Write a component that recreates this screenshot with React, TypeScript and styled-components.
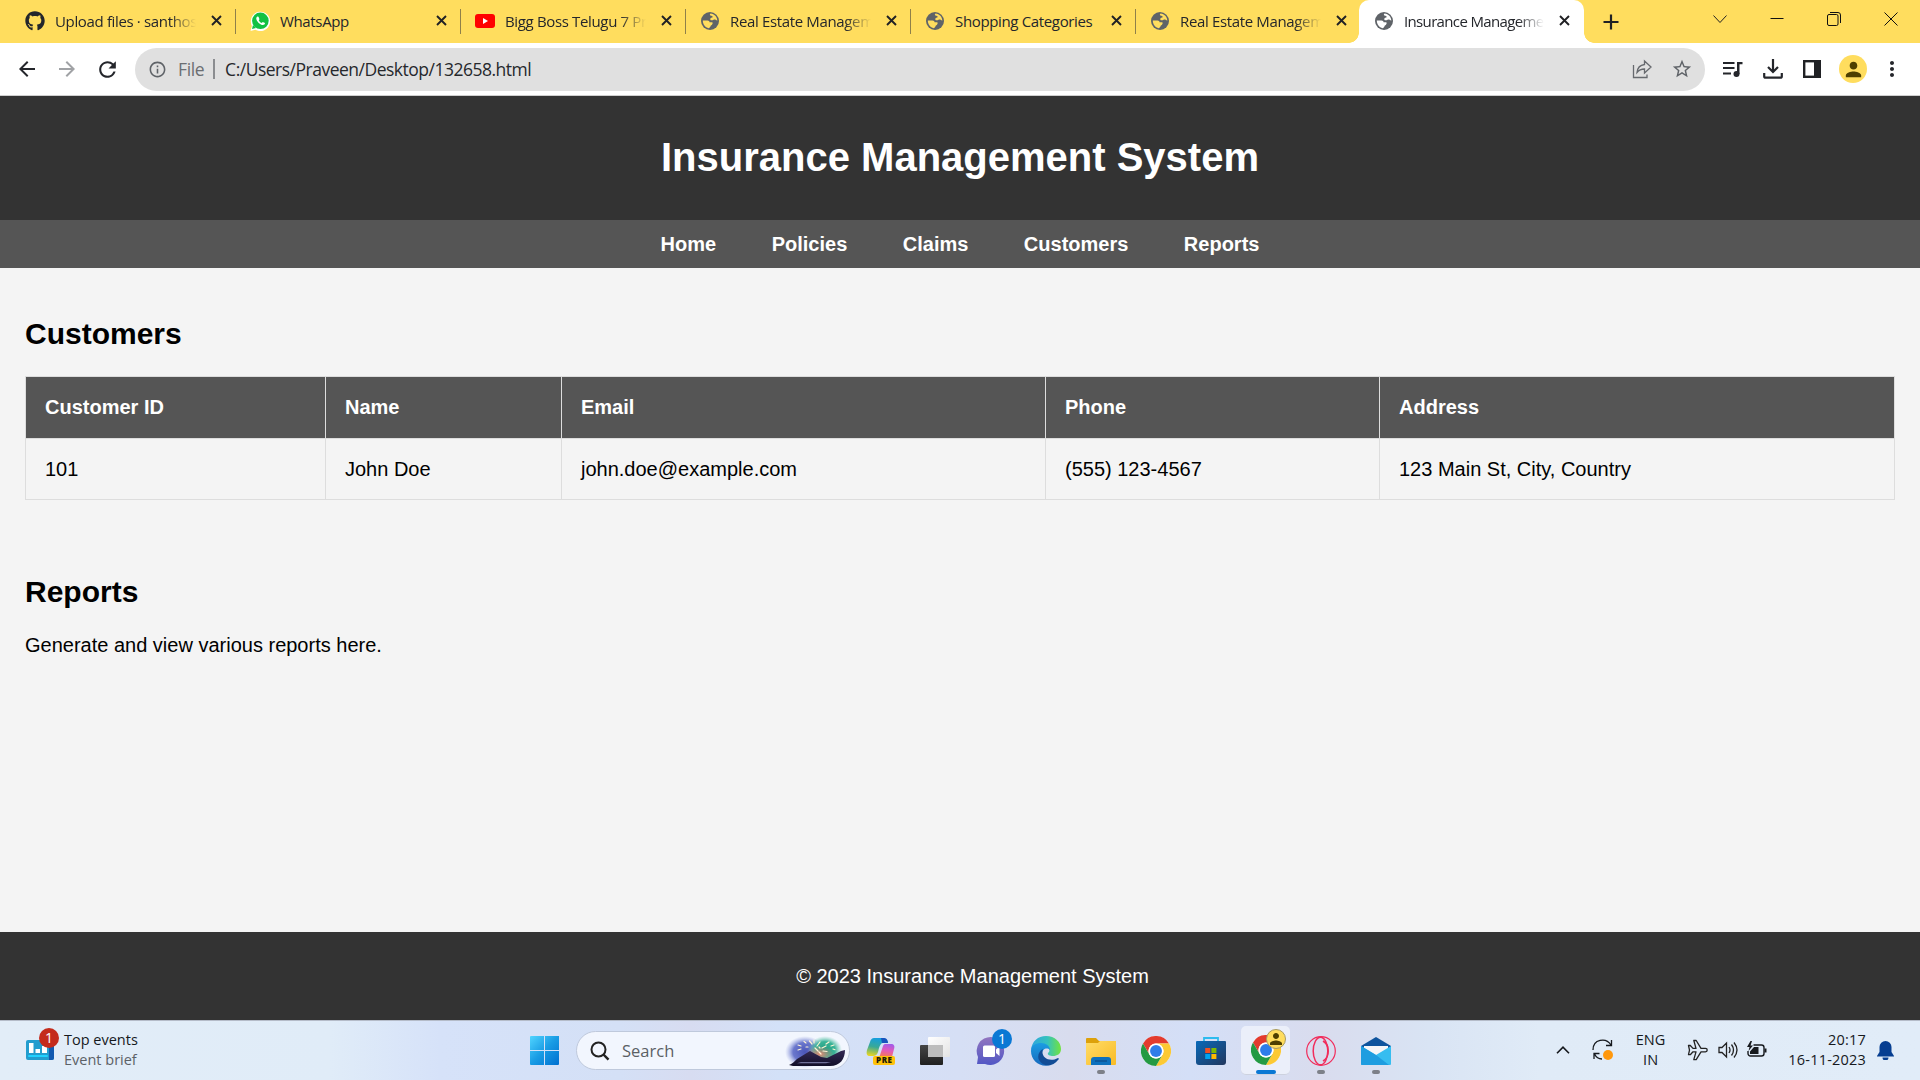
import React from "react";
import styled, { createGlobalStyle, css } from "styled-components";
import {
  MdArrowBack, MdArrowForward, MdRefresh, MdInfoOutline, MdStarBorder, MdMoreVert, MdPerson,
} from "react-icons/md";
import { FaGithub } from "react-icons/fa";

const Global = createGlobalStyle`
  html, body { margin: 0; padding: 0; }
  body { overflow: hidden; }
  *, *::before, *::after { box-sizing: border-box; }
  svg { display: block; flex: none; }
`;

const ui = css`font-family: "Open Sans", "Noto Sans", sans-serif;`;

const Screen = styled.div`
  width: 1920px;
  height: 1080px;
  display: flex;
  flex-direction: column;
  overflow: hidden;
  ${ui}
`;

/* Browser window */
const TabStrip = styled.div`
  height: 43px;
  flex: none;
  display: flex;
  background: #ffdd5e;
  padding-left: 11px;
  color: #24262b;
`;
const Tab = styled.div<{ $active?: boolean; $line?: boolean }>`
  position: relative;
  width: 225px;
  height: 43px;
  flex: none;
  display: flex;
  align-items: center;
  padding: 0 14px 2px 14px;
  gap: 10px;
  ${(p) => p.$line && css`
    &::after {
      content: "";
      position: absolute;
      right: 0;
      top: 9px;
      width: 1px;
      height: 25px;
      background: #8f8049;
    }
  `}
  ${(p) => p.$active && css`
    background: #fff;
    border-radius: 10px 10px 0 0;
    margin-left: -2px;
    padding-left: 15px;
    &::before, &::after {
      content: "";
      position: absolute;
      bottom: 0;
      width: 10px;
      height: 10px;
    }
    &::before { left: -10px; background: radial-gradient(circle at 0 0, #ffdd5e 9.5px, #fff 10px); }
    &::after { right: -10px; background: radial-gradient(circle at 100% 0, #ffdd5e 9.5px, #fff 10px); }
  `}
`;
const TabTitle = styled.span<{ $fade?: boolean; $tight?: boolean }>`
  flex: 1;
  min-width: 0;
  overflow: hidden;
  white-space: nowrap;
  font-size: 15px;
  line-height: 22px;
  letter-spacing: ${(p) => (p.$tight ? -0.65 : -0.35)}px;
  ${(p) => p.$fade && css`
    -webkit-mask-image: linear-gradient(to right, #000 calc(100% - 26px), transparent);
    mask-image: linear-gradient(to right, #000 calc(100% - 26px), transparent);
  `}
`;
const TabClose = styled.span`
  width: 11px;
  margin-left: 5px;
`;
const NewTab = styled.div`
  width: 54px;
  height: 43px;
  display: flex;
  align-items: center;
  justify-content: center;
`;
const WindowButtons = styled.div`
  margin: 0 1px 0 auto;
  height: 38px;
  width: 228px;
  display: flex;
  align-items: center;
`;
const WindowButton = styled.div`
  width: 57px;
  display: flex;
  justify-content: center;
`;
const Toolbar = styled.div`
  height: 53px;
  flex: none;
  display: flex;
  align-items: center;
  background: #fff;
  border-bottom: 1px solid #cfcfcf;
  color: #24262b;
  padding-left: 15px;
`;
const NavButtons = styled.div`
  display: flex;
  flex: none;
  gap: 16px;
  width: 120px;
`;
const Omnibox = styled.div`
  height: 43px;
  width: 1570px;
  flex: none;
  border-radius: 22px;
  background: #e0e0e0;
  display: flex;
  align-items: center;
  padding: 0 12px 0 13px;
  color: #5f6368;
  font-size: 17.5px;
`;
const Scheme = styled.span`
  margin-left: 11px;
  color: #6b6e72;
  letter-spacing: -.4px;
`;
const Bar = styled.span`
  width: 2px;
  height: 20px;
  margin: 0 10.5px 0 8.5px;
  background: #8b8d90;
`;
const Url = styled.span`
  color: #26282c;
  letter-spacing: -.5px;
  flex: 1;
`;
const PageActions = styled.div`
  display: flex;
  gap: 18px;
  align-items: center;
`;
const BrowserActions = styled.div`
  margin-left: 18px;
  flex: none;
  display: grid;
  grid-template-columns: 20px 20px 18px 28px 24px;
  column-gap: 20px;
  align-items: center;
`;
const Avatar = styled.div`
  width: 28px;
  height: 28px;
  border-radius: 50%;
  margin-left: -2px;
  display: flex;
  align-items: center;
  justify-content: center;
  background: #ffdd5e;
  color: #4d3f00;
`;
const More = styled.div`margin-left: -9px;`;

/* Web page */
const Page = styled.div`
  flex: 1;
  min-height: 0;
  display: flex;
  flex-direction: column;
  background: #f4f4f4;
  font-family: "Liberation Sans", Arial, sans-serif;
  font-size: 20px;
  line-height: 23px;
  color: #000;
`;
const Header = styled.header`
  height: 124px;
  padding-bottom: 2px;
  background: #333;
  color: #fff;
  display: flex;
  align-items: center;
  justify-content: center;
`;
const Title = styled.h1`
  margin: 0;
  font-size: 40px;
  line-height: 46px;
`;
const Nav = styled.nav`
  height: 48px;
  background: #555;
  color: #fff;
  display: flex;
  justify-content: center;
  align-items: center;
  gap: 55.5px;
  font-weight: bold;
`;
const Main = styled.main`
  flex: 1;
  padding: 49px 25px 0;
`;
const Heading = styled.h2`
  margin: 0;
  font-size: 30px;
  line-height: 34px;
`;
const Table = styled.table`
  width: 1869px;
  margin: 25px 0 75px;
  border-collapse: collapse;
  table-layout: fixed;
`;
const cell = css`
  height: 61.5px;
  padding: 0 19px;
  border: 1px solid #ddd;
  text-align: left;
`;
const Th = styled.th`${cell} background: #555; color: #fff;`;
const Td = styled.td`${cell} padding-top: 2px;`;
const Paragraph = styled.p`margin: 25px 0 0;`;
const Footer = styled.footer`
  height: 88px;
  padding-left: 25px;
  background: #333;
  color: #fff;
  display: flex;
  align-items: center;
  justify-content: center;
`;

/* Taskbar */
const Taskbar = styled.div`
  height: 60px;
  flex: none;
  display: flex;
  align-items: center;
  border-top: 1px solid #b5bcc9;
  background: linear-gradient(90deg, #e2edf8 0, #e0ecf8 330px, #d6e2f9 440px, #d4e0f6 620px, #d7dcf1 690px, #d3e1f8 780px, #d6dff5 960px, #d8dcee 1070px, #d4dff7 1190px, #d9dcee 1320px, #d9e4f4 1430px, #e0ebf7 1540px, #e1ecf8 1920px);
  color: #16191d;
`;
const Widgets = styled.div`
  width: 517px;
  padding: 0 0 2px 25px;
  display: flex;
  align-items: center;
  gap: 9px;
`;
const Lines = styled.div<{ $align?: string; $wide?: boolean }>`
  display: flex;
  flex-direction: column;
  text-align: ${(p) => p.$align || "left"};
  font-size: 14.5px;
  line-height: 20px;
  letter-spacing: ${(p) => (p.$wide ? ".2px" : "0")};
  white-space: nowrap;
`;
const Muted = styled.span`color: #5c6167;`;
const Apps = styled.div`
  display: flex;
  align-items: center;
`;
const Search = styled.div`
  width: 274px;
  height: 39px;
  margin: 0 3px 0 4px;
  border-radius: 20px;
  border: 1px solid #bfc9dc;
  background: #f2f6fe;
  display: flex;
  align-items: center;
  padding: 0 2px 0 13px;
  gap: 12px;
  font-size: 16.5px;
  color: #5b5f65;
  span { flex: 1; }
`;
const TaskButton = styled.div<{ $active?: boolean; $mark?: "open" | "focus" }>`
  position: relative;
  width: 49px;
  height: 49px;
  margin: 0 3px;
  display: flex;
  align-items: center;
  justify-content: center;
  ${(p) => p.$active && css`
    background: #ebeffa;
    border-radius: 5px;
    border-bottom: 1px solid #cdd2df;
  `}
  ${(p) => p.$mark && css`
    &::after {
      content: "";
      position: absolute;
      bottom: ${p.$active ? 0 : 1}px;
      width: ${p.$mark === "focus" ? 20 : 8}px;
      height: 4px;
      border-radius: 2px;
      background: ${p.$mark === "focus" ? "#0a78d4" : "#7d8088"};
    }
  `}
`;
const Badge = styled.span<{ $x: number; $y: number; $bg: string; $avatar?: boolean }>`
  position: absolute;
  left: ${(p) => p.$x}px;
  top: ${(p) => p.$y}px;
  width: 20px;
  height: 20px;
  border-radius: 50%;
  background: ${(p) => p.$bg};
  color: ${(p) => (p.$avatar ? "#4d3f00" : "#fff")};
  ${(p) => p.$avatar && "border: 1px solid #a99b61;"}
  display: flex;
  align-items: center;
  justify-content: center;
  font-size: 14px;
  line-height: 20px;
`;
const WidgetIcon = styled.div`position: relative;`;
const Tray = styled.div`
  margin-left: auto;
  padding: 0 26px 1px 0;
  display: flex;
  align-items: center;
`;
const TraySpace = styled.div`margin-left: 22px;`;
const Bell = styled.div`margin-left: 11px;`;
const TrayGroup = styled.div`
  display: flex;
  align-items: center;
  gap: 9px;
  width: 82px;
  margin: 0 19px 0 22px;
`;

const tabs = [
  { title: "Upload files · santhosh", icon: <FaGithub size={20} />, fade: true },
  { title: "WhatsApp", icon: <WhatsApp /> },
  { title: "Bigg Boss Telugu 7 Promo", icon: <YouTube />, fade: true },
  { title: "Real Estate Management", icon: <Globe />, fade: true },
  { title: "Shopping Categories", icon: <Globe /> },
  { title: "Real Estate Management", icon: <Globe />, fade: true },
  { title: "Insurance Management", icon: <Globe land="#fff" />, fade: true },
];

function Globe({ land = "#ffdd5e" }: { land?: string }) {
  return (
    <svg width="20" height="20" viewBox="0 0 20 20">
      <circle cx="10" cy="10" r="9" fill="#5f6368" />
      <path d="M10.600 2.600c3.800.3 6.600 3.400 6.700 7.200-1.200-.8-1.800-1.500-3.200-1.300-1 .1-1.100.9-2.400.8-1.300 0-1.700-.9-1.300-1.800.4-.8 1.500-.5 2.200-1.200.8-.9-.9-1.500-2.200-1.800-.8-.2-.7-1.200.2-1.900zM2.800 9.600h4.700c1.300 0 2 .8 2.100 1.700h2.300c.6 0 .9.6.7 1.200l-.5 1.100c-.3.7-1.200.6-1.500 1.300-.4.8-.7 1.800-1.900 2.300-3.500-.5-5.800-3.700-5.900-7.600z" fill={land} />
    </svg>
  );
}
function WhatsApp() {
  return (
    <svg width="20" height="20" viewBox="0 0 20 20">
      <path d="M.5 20l1.400-5A9.700 9.700 0 1 1 5.400 18.700z" fill="#fff" />
      <circle cx="10.400" cy="9.800" r="8.300" fill="#12c143" />
      <path d="M2 18l1-4 3 3z" fill="#12c143" />
      <path d="M7.200 5.500c-2.600 2.300.8 6.400 3.700 8 2.200 1.200 4.200.2 4.100-1.500l-2.200-1.100-1.100 1.200c-1.400-.6-2.400-1.600-3-2.800l.8-1.100-1-2.500z" fill="#fff" />
    </svg>
  );
}
function YouTube() {
  return (
    <svg width="20" height="20" viewBox="0 0 20 20">
      <rect x="0" y="3" width="20" height="14" rx="3" fill="#f00" />
      <path d="M8 7v6l5-3z" fill="#fff" />
    </svg>
  );
}
function Chrome() {
  return (
    <svg width="30" height="30" viewBox="0 0 48 48">
      <circle cx="24" cy="24" r="24" fill="#fff" />
      <path d="M3.200 12A24 24 0 0 1 44.800 12H24a12 12 0 0 0-10.400 18z" fill="#e33b2e" />
      <path d="M44.800 12A24 24 0 0 1 24 48l10.400-18A12 12 0 0 0 24 12z" fill="#fcc934" />
      <path d="M24 48A24 24 0 0 1 3.200 12l10.400 18A12 12 0 0 0 34.400 30z" fill="#249a43" />
      <circle cx="24" cy="24" r="12" fill="#fff" />
      <circle cx="24" cy="24" r="9.500" fill="#2f7de9" />
    </svg>
  );
}
function Start() {
  return (
    <svg width="29" height="29" viewBox="0 0 29 29">
      <defs><linearGradient id="st" x1="0" y1="0" x2="1" y2="1"><stop stopColor="#50d4ff" /><stop offset=".5" stopColor="#189be4" /><stop offset="1" stopColor="#0070d0" /></linearGradient></defs>
      <path d="M1 0h13v14H0V1a1 1 0 0 1 1-1zM15 0h14v14H15zM0 15h14v14H1a1 1 0 0 1-1-1zM15 15h14v13a1 1 0 0 1-1 1H15z" fill="url(#st)" />
    </svg>
  );
}
function Fireworks() {
  return (
    <svg width="62" height="34" viewBox="0 0 62 34">
      <defs>
        <radialGradient id="fb"><stop stopColor="#4a55b8" /><stop offset=".6" stopColor="#6b78cd" /><stop offset="1" stopColor="#a3aee4" stopOpacity="0" /></radialGradient>
        <radialGradient id="fg"><stop stopColor="#1e9d80" /><stop offset=".6" stopColor="#3ab397" /><stop offset="1" stopColor="#7fcfb9" stopOpacity="0" /></radialGradient>
        <linearGradient id="fm" x1="0" y1="0" x2="0" y2="1"><stop stopColor="#352a55" /><stop offset="1" stopColor="#110f28" /></linearGradient>
        <radialGradient id="fo"><stop stopColor="#e58a72" /><stop offset="1" stopColor="#d98276" stopOpacity="0" /></radialGradient>
      </defs>
      <ellipse cx="20" cy="18" rx="20" ry="16" fill="url(#fb)" />
      <ellipse cx="40" cy="16" rx="17" ry="14" fill="url(#fg)" />
      <ellipse cx="35" cy="20" rx="14" ry="8" fill="url(#fo)" />
      <path d="M4 31c3-1 5-3 8-6l13-8 11 6 6 1 14-7 4-1c0 9-5 16-15 16H8z" fill="url(#fm)" />
      <path d="M16 28h30l-5 1.200H12z" fill="#6f7099" />
      <path d="M27 10l-2.500-3M29 9V6M32 12l3-4M21 9l-2-1.500M16 12l-3-1M16 15l-3 1M37 14l4-2M38 17l4 .5M41 10l3-2M46 12l3-1M30 14l3 3M34 18l2 2M23 13h-2M48 15l2 .7M34 13l1 1" fill="none" stroke="#fff3d5" strokeWidth="1.200" strokeLinecap="round" />
    </svg>
  );
}
function Copilot() {
  return (
    <svg width="30" height="30" viewBox="0 0 30 30">
      <defs>
        <linearGradient id="ca" x1=".5" y1="0" x2=".3" y2="1"><stop stopColor="#159ee0" /><stop offset=".5" stopColor="#39a997" /><stop offset="1" stopColor="#e8d522" /></linearGradient>
        <linearGradient id="cb" x1=".6" y1="0" x2=".4" y2="1"><stop stopColor="#a45be8" /><stop offset=".5" stopColor="#e45ab9" /><stop offset="1" stopColor="#f47b4f" /></linearGradient>
      </defs>
      <path d="M8 2h9c3 0 4 2 5 5h-5c-2 0-3 2-4 5l-1 4c-1 3-3 4-5 4H4c-3 0-4-2-3-6L4 6c1-3 2-4 4-4z" fill="url(#ca)" />
      <path d="M15 2h3c3 0 4 3 4 5h-6z" fill="#1854bd" />
      <path d="M19 8h6c3 0 4 2 3 5l-2 8H11c3 0 3-2 4-5l2-6c.4-1 1-2 2-2z" fill="url(#cb)" />
      <rect x="7" y="20" width="22" height="9" rx="2" fill="#ffc20a" />
      <text x="18.300" y="27.400" textAnchor="middle" fontFamily="Open Sans" fontWeight="800" fontSize="8" letterSpacing=".5" fill="#221b05">PRE</text>
    </svg>
  );
}
function TaskView() {
  return (
    <svg width="32" height="30" viewBox="0 0 32 30">
      <defs>
        <linearGradient id="tv" x1="0" y1="0" x2="0" y2="1"><stop stopColor="#454545" /><stop offset="1" stopColor="#202020" /></linearGradient>
        <linearGradient id="tw" x1="0" y1="0" x2="1" y2="1"><stop stopColor="#fff" /><stop offset="1" stopColor="#e4e4e4" /></linearGradient>
      </defs>
      <rect x="0" y="9" width="23" height="20" rx="1" fill="url(#tv)" />
      <rect x="8" y="1" width="22" height="20" rx="1" fill="url(#tw)" />
      <path d="M8 9h15v12H8z" fill="#bdbdbd" />
    </svg>
  );
}
function Chat() {
  return (
    <svg width="30" height="30" viewBox="0 0 30 30">
      <defs><linearGradient id="ch" x1="0" y1="0" x2="0" y2="1"><stop stopColor="#9275bf" /><stop offset="1" stopColor="#5157c5" /></linearGradient></defs>
      <path d="M15 1a14 14 0 1 1-6 27H1l1-7A14 14 0 0 1 15 1z" fill="url(#ch)" />
      <rect x="7" y="9.500" width="12" height="11.500" rx="1.500" fill="#fff" />
      <path d="M20 13.500l3.500-3v9.500l-3.500-3z" fill="#fff" />
    </svg>
  );
}
function Edge() {
  return (
    <svg width="30" height="30" viewBox="0 0 30 30">
      <defs>
        <linearGradient id="e1"><stop stopColor="#2da5df" /><stop offset=".55" stopColor="#35c2bd" /><stop offset="1" stopColor="#72e33e" /></linearGradient>
        <linearGradient id="e2" x1="0" y1="0" x2="0" y2="1"><stop stopColor="#1b9de2" /><stop offset="1" stopColor="#1769bd" /></linearGradient>
      </defs>
      <path d="M0 14C1 5 7 0 15 0c9 0 15 6 15 13 0 5-4 7-8 7-3 0-6-1-5-3 1-1 2-2 1-4C16 7 5 6 0 14z" fill="url(#e1)" />
      <path d="M0 15C0 9 5 7 10 7c5 0 9 3 9 7-3-3-8-1-8 4 0 6 5 10 9 11C9 32 0 25 0 15z" fill="url(#e2)" />
      <path d="M12 13c-3 8 6 14 15 9 1 0 1 1 0 2-5 7-15 7-19 0-2-4 0-9 4-11z" fill="#124d96" />
    </svg>
  );
}
function Folder() {
  return (
    <svg width="30" height="30" viewBox="0 0 30 30">
      <defs><linearGradient id="fd" x1="0" y1="0" x2="1" y2="1"><stop stopColor="#ffdc68" /><stop offset="1" stopColor="#f9bb25" /></linearGradient></defs>
      <path d="M0 8V3a1 1 0 0 1 1-1h9l3 3h16a1 1 0 0 1 1 1v5H0z" fill="#dda10a" />
      <path d="M0 7h12l2-2h16v23a1 1 0 0 1-1 1H1a1 1 0 0 1-1-1z" fill="url(#fd)" />
      <path d="M5 29v-5a3 3 0 0 1 3-3h14a3 3 0 0 1 3 3v5z" fill="#0d70bd" />
      <path d="M9 25h12" stroke="#0b4e8c" strokeWidth="1.300" />
    </svg>
  );
}
function Store() {
  return (
    <svg width="30" height="30" viewBox="0 0 30 30">
      <defs><linearGradient id="ms" x1="0" y1="0" x2="1" y2="1"><stop stopColor="#0869b9" /><stop offset="1" stopColor="#22375e" /></linearGradient></defs>
      <path d="M8 7V2h14v5" fill="none" stroke="#2dbbee" strokeWidth="1.800" />
      <path d="M0 6a1 1 0 0 1 1-1h28a1 1 0 0 1 1 1v20a3 3 0 0 1-3 3H3a3 3 0 0 1-3-3z" fill="url(#ms)" />
      <path d="M9.200 12h5v5h-5z" fill="#f25022" /><path d="M15.400 12h5v5h-5z" fill="#7fba00" />
      <path d="M9.200 18h5v5h-5z" fill="#00a4ef" /><path d="M15.400 18h5v5h-5z" fill="#ffb900" />
    </svg>
  );
}
function OperaGx() {
  return (
    <svg width="30" height="30" viewBox="0 0 30 30" fill="none" stroke="#f12c5b">
      <circle cx="15" cy="15" r="14.300" strokeWidth="1.200" />
      <ellipse cx="14.500" cy="15" rx="7.300" ry="13.800" strokeWidth="1.500" />
      <path d="M17 5c7 4 7 16 0 20" strokeWidth="1.500" />
    </svg>
  );
}
function Mail() {
  return (
    <svg width="30" height="30" viewBox="0 0 30 30">
      <path d="M0 10L15 1l15 9v3H0z" fill="#0f549d" />
      <path d="M3 10h24v5L15 22 3 15z" fill="#f5f6f8" />
      <path d="M0 10l15 9L30 10v18a1 1 0 0 1-1 1H1a1 1 0 0 1-1-1z" fill="#36bdf0" />
      <path d="M0 10l15 9 13 10H1a1 1 0 0 1-1-1z" fill="#1e9de0" />
    </svg>
  );
}

const headers = ["Customer ID", "Name", "Email", "Phone", "Address"];
const row = ["101", "John Doe", "john.doe@example.com", "(555) 123-4567", "123 Main St, City, Country"];
const widths = [300, 236, 484, 334, 515];

export default function App() {
  return (
    <Screen>
      <Global />
      <TabStrip>
        {tabs.map((t, i) => (
          <Tab key={i} $active={i === 6} $line={i < 5}>
            {t.icon}
            <TabTitle $fade={t.fade} $tight={i === 6}>{t.title}</TabTitle>
            <TabClose><svg width="11" height="11" viewBox="0 0 11 11" fill="none" stroke="#202124" strokeWidth="1.900"><path d="M1 1l9 9M10 1l-9 9" /></svg></TabClose>
          </Tab>
        ))}
        <NewTab><svg width="16" height="16" viewBox="0 0 16 16" stroke="#202124" strokeWidth="2.200"><path d="M8 .5v15M.5 8h15" /></svg></NewTab>
        <WindowButtons>
          <WindowButton><svg width="14" height="14" viewBox="0 0 14 14" fill="none" stroke="#222"><path d="M.5 3.500l6.500 7 6.500-7" /></svg></WindowButton>
          <WindowButton><svg width="14" height="14" viewBox="0 0 14 14" stroke="#111"><path d="M.5 6.500h13" /></svg></WindowButton>
          <WindowButton><svg width="14" height="14" viewBox="0 0 14 14" fill="none" stroke="#111"><rect x=".5" y="2.500" width="10.500" height="11" rx="1.500" /><path d="M3 .5h8a2.500 2.500 0 0 1 2.500 2.500v8" /></svg></WindowButton>
          <WindowButton><svg width="14" height="14" viewBox="0 0 14 14" stroke="#111"><path d="M.5.5l13 13M13.500.5l-13 13" /></svg></WindowButton>
        </WindowButtons>
      </TabStrip>
      <Toolbar>
        <NavButtons>
          <MdArrowBack size={24} /><MdArrowForward size={24} color="#a0a2a5" /><MdRefresh size={25} />
        </NavButtons>
        <Omnibox>
          <MdInfoOutline size={19} />
          <Scheme>File</Scheme><Bar />
          <Url>C:/Users/Praveen/Desktop/132658.html</Url>
          <PageActions>
            <svg width="21" height="20" viewBox="0 0 21 20" fill="none" stroke="#66696e" strokeWidth="1.300"><path d="M1.500 6v12.500h13.500V15.500M5 13.500c.5-5 3.500-7.500 7.500-8V2l6.500 6-6.500 6v-4c-3.500 0-5.500 1-7.500 3.500z" /></svg>
            <MdStarBorder size={22} />
          </PageActions>
        </Omnibox>
        <BrowserActions>
          <svg width="20" height="17" viewBox="0 0 20 17"><path d="M0 2h11.500M0 7h11.500M0 12.500h8" stroke="#24262b" strokeWidth="2" /><path d="M14 1h5.500v2.200h-3V13H14z" fill="#24262b" /><circle cx="13.500" cy="13" r="3" fill="#24262b" /></svg>
          <svg width="20" height="20" viewBox="0 0 20 20" fill="none" stroke="#24262b" strokeWidth="2.200"><path d="M10 0v13M5 8l5 5 5-5M1.200 14v3.500a1.200 1.200 0 0 0 1.200 1.200h15.200a1.200 1.200 0 0 0 1.200-1.200V14" /></svg>
          <svg width="18" height="18" viewBox="0 0 18 18" fill="none"><rect x="1.200" y="1.200" width="15.600" height="15.600" stroke="#202124" strokeWidth="2.400" /><path d="M11 1h6v16h-6z" fill="#202124" /></svg>
          <Avatar><MdPerson size={23} /></Avatar>
          <More><MdMoreVert size={24} /></More>
        </BrowserActions>
      </Toolbar>
      <Page>
        <Header><Title>Insurance Management System</Title></Header>
        <Nav>{["Home", "Policies", "Claims", "Customers", "Reports"].map((n) => <span key={n}>{n}</span>)}</Nav>
        <Main>
          <Heading>Customers</Heading>
          <Table>
            <colgroup>{widths.map((w, i) => <col key={i} width={w} />)}</colgroup>
            <thead><tr>{headers.map((h) => <Th key={h}>{h}</Th>)}</tr></thead>
            <tbody><tr>{row.map((c) => <Td key={c}>{c}</Td>)}</tr></tbody>
          </Table>
          <Heading>Reports</Heading>
          <Paragraph>Generate and view various reports here.</Paragraph>
        </Main>
        <Footer>© 2023 Insurance Management System</Footer>
      </Page>
      <Taskbar>
        <Widgets>
          <WidgetIcon>
            <svg width="30" height="24" viewBox="0 0 30 24">
              <rect x="1" y="2" width="28" height="20" rx="2" fill="#239dce" />
              <path d="M24 2h3a2 2 0 0 1 2 2v16a2 2 0 0 1-2 2h-3z" fill="#125ab0" />
              <path d="M4 5h4.500v10H4zM10.500 11H15v4h-4.500zM17 8h5v7h-5z" fill="#fff" />
              <path d="M4 18h18" stroke="#21d2ff" strokeWidth="2" strokeLinecap="round" />
            </svg>
            <Badge $x={14} $y={-10} $bg="#c42b1c">1</Badge>
          </WidgetIcon>
          <Lines><span>Top events</span><Muted>Event brief</Muted></Lines>
        </Widgets>
        <Apps>
          <TaskButton><Start /></TaskButton>
          <Search>
            <svg width="20" height="20" viewBox="0 0 20 20" fill="none" stroke="#222" strokeWidth="2"><circle cx="8.500" cy="8.500" r="7" /><path d="M13.500 13.500l5 5.200" strokeWidth="2.500" /></svg>
            <span>Search</span>
            <Fireworks />
          </Search>
          <TaskButton><Copilot /></TaskButton>
          <TaskButton><TaskView /></TaskButton>
          <TaskButton><Chat /><Badge $x={26} $y={3} $bg="#0a78d4">1</Badge></TaskButton>
          <TaskButton><Edge /></TaskButton>
          <TaskButton $mark="open"><Folder /></TaskButton>
          <TaskButton><Chrome /></TaskButton>
          <TaskButton><Store /></TaskButton>
          <TaskButton $active $mark="focus"><Chrome /><Badge $x={25} $y={3} $bg="#ffdd5e" $avatar><MdPerson size={18} /></Badge></TaskButton>
          <TaskButton $mark="open"><OperaGx /></TaskButton>
          <TaskButton $mark="open"><Mail /></TaskButton>
        </Apps>
        <Tray>
          <svg width="14" height="8" viewBox="0 0 14 8" fill="none" stroke="#16191d" strokeWidth="1.600"><path d="M1 7.200l6-6 6 6" /></svg>
          <TraySpace>
            <svg width="22" height="22" viewBox="0 0 22 22" fill="none" stroke="#16191d" strokeWidth="1.300"><path d="M1 11C1 0 14-2 19 6M19.500 1v5.500H14M10 20c-3.500 0-6-2-7.500-5M2 20v-5.500h5.500" /><circle cx="16" cy="16" r="5" fill="#ff980d" stroke="none" /></svg>
          </TraySpace>
          <TraySpace><Lines $align="center"><span>ENG</span><span>IN</span></Lines></TraySpace>
          <TrayGroup>
            <svg width="22" height="22" viewBox="0 0 22 22" fill="none" stroke="#222" strokeWidth="1.300" strokeLinejoin="round"><path d="M1.500 6.500h1.800L6 9.400h3L6.800 1.500h2.400L14 9.400h4.500a1.700 1.700 0 0 1 0 3.400H14l-4.800 7.900H6.800L9 12.800H6l-2.700 2.900H1.500l1-4.600z" /></svg>
            <svg width="20" height="18" viewBox="0 0 20 18" fill="none" stroke="#222" strokeWidth="1.300"><path d="M1 6.500h3L8.500 2v14L4 11.500H1zM11 6q2 3 0 6M13.500 3.500q4 5.500 0 11M16 1.500q6 7.500 0 15" /></svg>
            <svg width="20" height="18" viewBox="0 0 20 18"><path d="M6.500 4h8a2.500 2.500 0 0 1 2.500 2.500v6a2.500 2.500 0 0 1-2.500 2.500h-11A2.500 2.500 0 0 1 1 12.500V10" fill="none" stroke="#16191d" strokeWidth="1.400" /><path d="M7 6h4.500v7H3v-2.500zM17.500 7.500h2v4h-2z" fill="#16191d" /><path d="M3.500 0L0 6h2.500L1.500 10 6 4.500H3.500L5 0z" fill="#16191d" /></svg>
          </TrayGroup>
          <Lines $align="right" $wide><span>20:17</span><span>16-11-2023</span></Lines>
          <Bell><svg width="17" height="19" viewBox="0 0 17 19" fill="#063e91"><path d="M8.500 0a6 6 0 0 1 6 6v5l2.500 4v.6H0V15l2.500-4V6a6 6 0 0 1 6-6zM5.500 16.500h6a3 3 0 0 1-6 0z" /></svg></Bell>
        </Tray>
      </Taskbar>
    </Screen>
  );
}
